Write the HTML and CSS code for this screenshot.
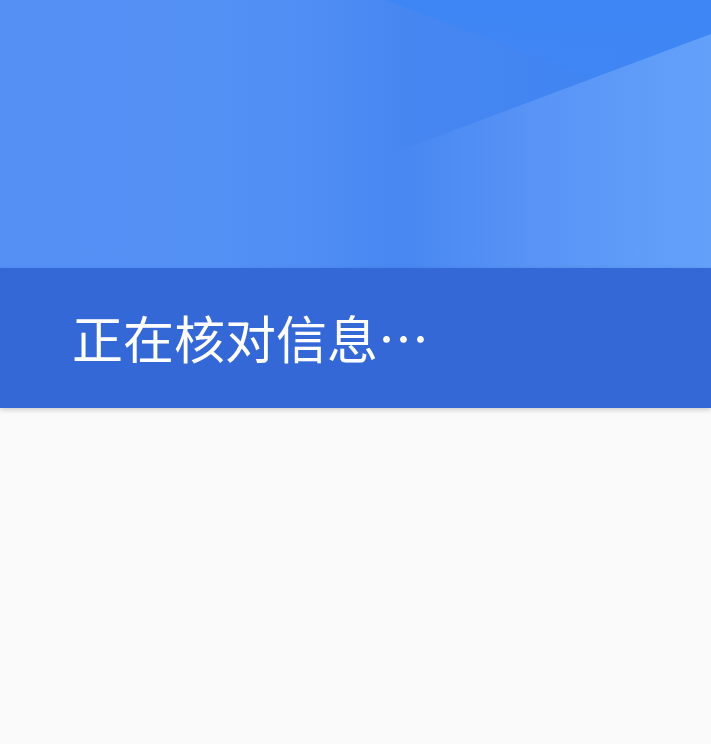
FILE: index.html
```html
<!DOCTYPE html>
<html lang="zh-CN">
<head>
<meta charset="utf-8">
<title>正在核对信息</title>
<link rel="stylesheet" href="styles.css">
</head>
<body>
<div class="page">
  <header class="hero">
    <svg class="hero-art" viewBox="0 0 711 268" preserveAspectRatio="none" aria-hidden="true">
      <defs>
        <linearGradient id="base" x1="0" y1="0" x2="711" y2="0" gradientUnits="userSpaceOnUse">
          <stop offset="0" stop-color="#5590f5"/>
          <stop offset="0.3" stop-color="#5491f5"/>
          <stop offset="0.45" stop-color="#4f8df4"/>
          <stop offset="0.58" stop-color="#4686f1"/>
          <stop offset="0.8" stop-color="#4185f2"/>
          <stop offset="1" stop-color="#3f85f3"/>
        </linearGradient>
        <linearGradient id="light" x1="380" y1="0" x2="711" y2="0" gradientUnits="userSpaceOnUse">
          <stop offset="0" stop-color="#4787f1" stop-opacity="0"/>
          <stop offset="0.12" stop-color="#4a89f2" stop-opacity="1"/>
          <stop offset="0.45" stop-color="#5893f6"/>
          <stop offset="0.85" stop-color="#609ef9"/>
          <stop offset="1" stop-color="#63a0fa"/>
        </linearGradient>
        <linearGradient id="dark" x1="0" y1="0" x2="0" y2="121" gradientUnits="userSpaceOnUse">
          <stop offset="0" stop-color="#3e86f5" stop-opacity="1"/>
          <stop offset="0.35" stop-color="#3f86f5" stop-opacity="0.85"/>
          <stop offset="1" stop-color="#3f86f5" stop-opacity="0.3"/>
        </linearGradient>
      </defs>
      <rect x="0" y="0" width="711" height="268" fill="url(#base)"/>
      <polygon points="385,0 711,0 711,121" fill="url(#dark)"/>
      <polygon points="711,34 300,188 300,268 711,268" fill="url(#light)"/>
    </svg>
  </header>
  <section class="status">
    <h1 class="status-text">正在核对信息…</h1>
  </section>
  <main class="content"></main>
</div>
</body>
</html>
```

FILE: styles.css
```css
html, body {
  margin: 0;
  padding: 0;
}

body {
  background: #fafafa;
  font-family: "Noto Sans CJK SC", "Noto Sans", sans-serif;
  width: 711px;
  height: 744px;
  overflow: hidden;
}

.page {
  display: flex;
  flex-direction: column;
  height: 744px;
}

.hero {
  height: 268px;
  flex: none;
}

.hero-art {
  display: block;
  width: 711px;
  height: 268px;
}

.status {
  height: 140px;
  flex: none;
  background: #3468d6;
  display: flex;
  align-items: center;
  padding-left: 72px;
  box-shadow: 0 2px 5px rgba(0, 0, 0, 0.18);
  position: relative;
  z-index: 1;
}

.status-text {
  margin: 0;
  color: #ffffff;
  font-size: 51px;
  font-weight: 400;
  line-height: 1;
  letter-spacing: 0;
  padding-bottom: 1px;
}

.content {
  flex: 1;
  background: #fafafa;
}
```
